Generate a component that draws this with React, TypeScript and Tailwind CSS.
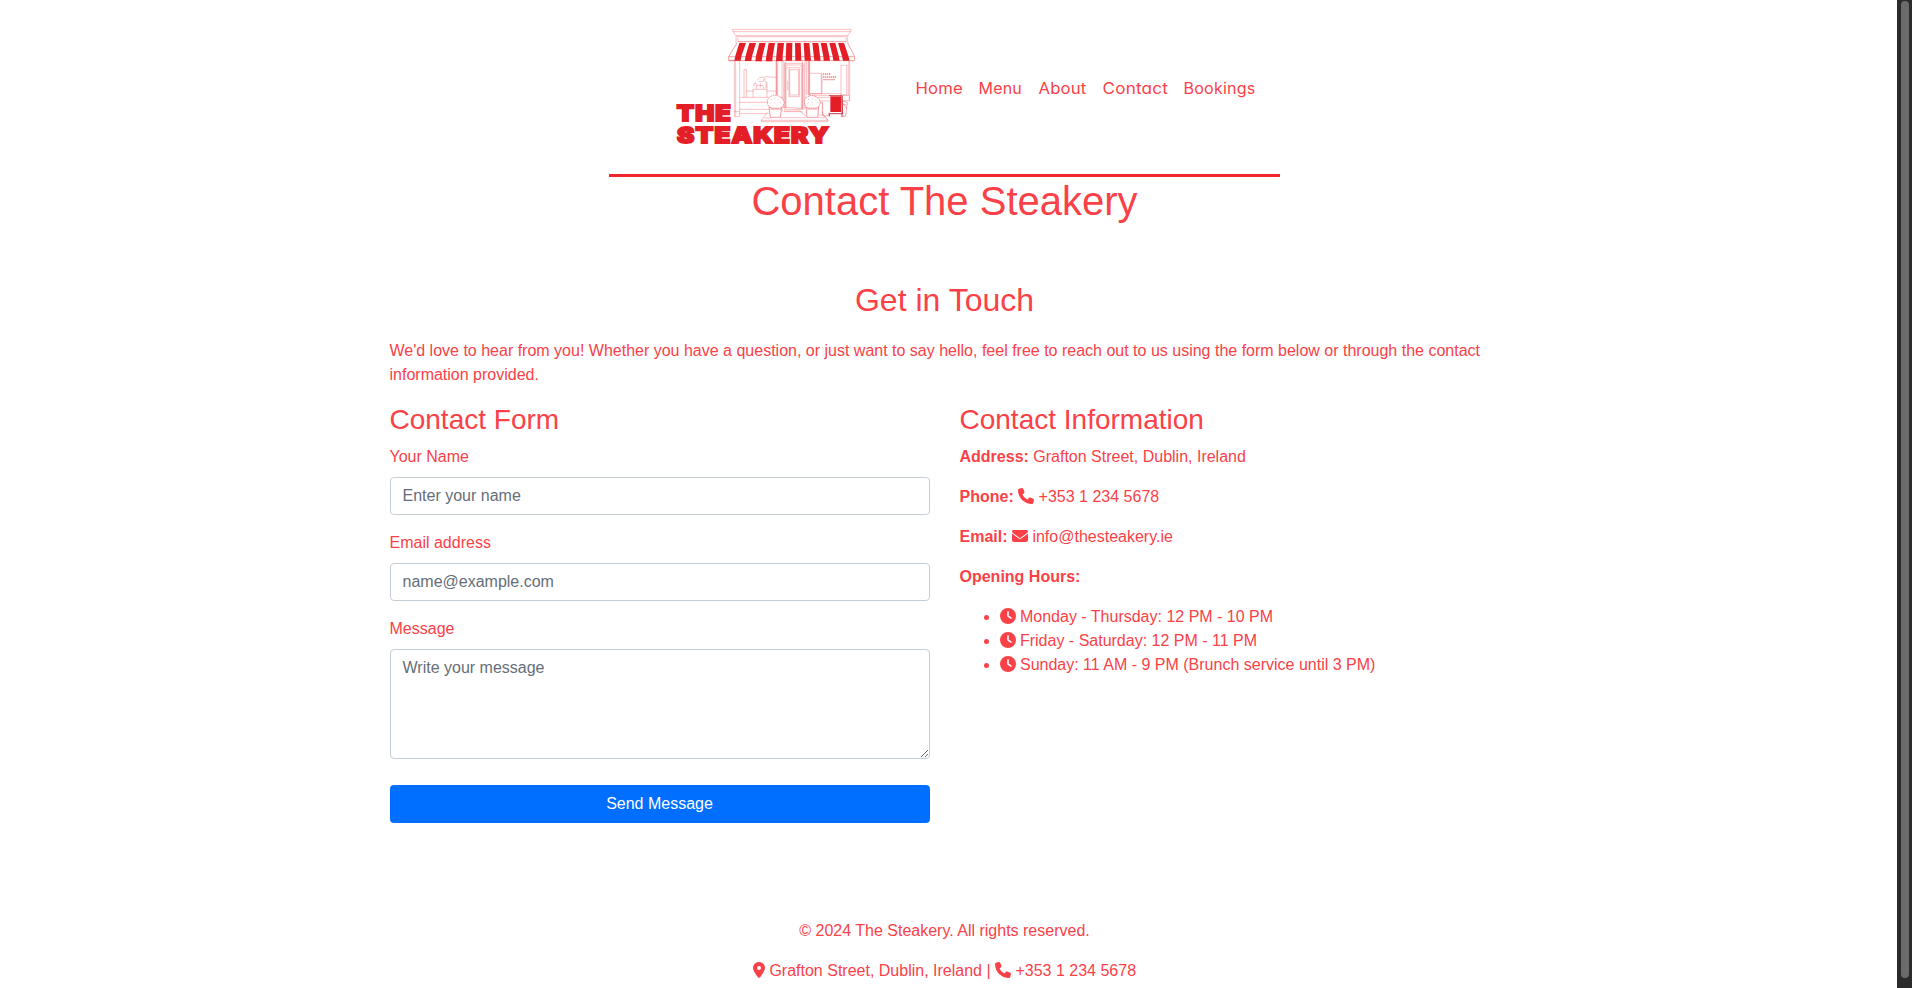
import type { ReactNode } from "react";
import { FaClock, FaEnvelope, FaLocationDot, FaPhone } from "react-icons/fa6";

const NAV = [
  { label: "Home", width: "w-[47px]", length: 47.5 },
  { label: "Menu", width: "w-[44px]", length: 43.5 },
  { label: "About", width: "w-[48px]", length: 48 },
  { label: "Contact", width: "w-[65px]", length: 65.5 },
  { label: "Bookings", width: "w-[72px]", length: 72 },
];

const HOURS = [
  "Monday - Thursday: 12 PM - 10 PM",
  "Friday - Saturday: 12 PM - 11 PM",
  "Sunday: 11 AM - 9 PM (Brunch service until 3 PM)",
];

const STRIPES = [
  "238,84 258,84 244,124 242,137 223,137 226,122",
  "268,84 288,84 276,124 274,138 254,138 257,122",
  "298,84 317,84 307,124 305,139 286,139 288,122",
  "326,84 345,84 338,124 337,139 317,139 319,122",
  "353,84 372,84 368,124 368,138 348,138 349,122",
  "379,84 397,84 396,137 377,137",
  "405,84 422,84 424,137 406,137",
  "431,84 448,84 453,137 434,137",
  "457,84 475,84 482,137 463,137",
  "482,84 500,84 508,122 510,137 491,137 490,124",
  "508,84 526,84 536,122 539,137 520,137 518,124",
  "534,84 552,84 565,122 569,137 549,137 546,124",
];

function Logo() {
  return (
    <svg className="h-[140px] w-[210px] shrink-0" viewBox="0 0 630 420" fill="none">
      <g stroke="#e9505a" strokeOpacity="0.6" strokeWidth="1.8">
        <path d="M217 43H574L572 50H219Z" />
        <path d="M219 50L228 62H563L572 50M228 62V84M231 65H560M563 62V84M234 68V82M558 68V82" />
        <path d="M234 80H558" strokeWidth="3" />
        <path d="M231 84L206 125V137H226M563 84L584 125V137H206M206 125H584" strokeOpacity="0.9" />
        <path d="M223 138V305H239V138M227 140V303M223 290H239" />
        <path d="M565 138V240M569 138V258M543 151H560V240H543Z" />
        <path d="M252 164H259V247M252 164V247M241 247H325M239 262H325M239 283H330M239 296H327M347 247H370" />
        <path d="M260 228H281M279 247V223H321V247M321 228H347M290 222V211H308L312 222M286 214L279 209L286 203L290 211M292 196L300 187L312 186L316 192L309 195L318 201V219M296 200H310M316 185L347 187M301 205V218M321 223V200" />
        <path d="M348 138V240M353 138V240M366 138V290M371 138V280M435 138V280M440 138V240M445 138V240M449 138V245" />
        <path d="M350 138V240M447 138V240" strokeWidth="3" />
        <path d="M374 145H428V283H374ZM378 150H424V280M378 150V280M381 158H418V245H387V160M389 164H416V240H389ZM383 197V226M370 276L428 281M371 290H428M432 145V283" />
        <path d="M376 140V278M427 140V283" strokeWidth="2" />
        <path d="M449 175H484V236H449M486 175V236M452 236H543M449 241H508M453 247H508M546 241H568V257H546M453 258H508" />
        <path d="M321 292L304 316H503L484 290M304 316V320H503V316M313 309H332M362 308H438M474 308H494M371 288H420L438 304" />
        <path d="M475 263H487V300M488 260V303H506M475 300H490L506 317" />
      </g>
      <path
        d="M489 177H511M489 186H528M490 194H524"
        stroke="#e44650"
        strokeWidth="4"
        strokeDasharray="4 2"
        strokeOpacity="0.7"
      />
      <g fill="#fff" stroke="#e9505a" strokeOpacity="0.85" strokeWidth="2">
        <path d="M327 276H365L361 307H331Z" />
        <path d="M438 276H476L473 307H441Z" />
        <path d="M332 279L323 268L322 255L330 245L342 240L356 243L368 251L373 263L368 274L360 280Z" strokeDasharray="5 2" />
        <path d="M443 279L434 269L433 255L440 246L454 241L468 245L478 252L481 264L477 274L469 279Z" strokeDasharray="5 2" />
        <path d="M333 255L336 252M343 248L346 251M354 254L357 251M361 262L363 265M331 265L334 263M342 262L344 265M444 255L447 252M456 248L459 251M466 254L468 257M471 264L473 261M443 265L446 263M455 261L457 264" strokeOpacity=".6" />
        <path d="M331 282H362M441 282H473" />
      </g>
      <path d="M547 258L562 262L557 303L547 307M548 269H558M545 297L552 304M508 292L503 303M544 258L561 282" stroke="#e9505a" strokeOpacity="0.7" strokeWidth="2" />
      <path d="M507 242H546L548 296H508V304M546 242V306" stroke="#c84049" strokeWidth="3" />
      <path d="M511 244H543V291H511Z" fill="#e41e26" />
      <g fill="#e41e26">
        {STRIPES.map((points) => (
          <polygon key={points} points={points} />
        ))}
      </g>
      <g
        fill="#e41e26"
        stroke="#e41e26"
        strokeWidth="5.5"
        className="font-['Inter',sans-serif] text-[64px] font-black tracking-[3px]"
      >
        <text x="50" y="319" textLength="166" lengthAdjust="spacingAndGlyphs">THE</text>
        <text x="51" y="384" textLength="459" lengthAdjust="spacingAndGlyphs">STEAKERY</text>
      </g>
    </svg>
  );
}

function Field({ label, children }: { label: string; children: ReactNode }) {
  return (
    <label className="mb-4 block">
      <span className="mb-2 block">{label}</span>
      {children}
    </label>
  );
}

const CONTROL =
  "block w-full rounded border border-[#c5ced6] bg-white px-3 py-1.5 text-base leading-6 text-[#495057] placeholder:text-[#656e77]";

export default function App() {
  return (
    <div className="flex h-[988px] w-full overflow-hidden bg-white font-['Liberation_Sans',Arial,sans-serif] text-base leading-6 text-[#fa4147]">
      <div className="flex-1 overflow-hidden pr-2">
        <header className="mx-auto flex h-[177px] w-[671px] items-start border-b-[3px] border-[#f0262a]">
          <div className="pt-[15px] pl-[51px]">
            <Logo />
          </div>
          <nav className="mt-[76px] ml-[46px] flex gap-4">
            {NAV.map((item) => (
              <a key={item.label} href="#" className={item.width}>
                <svg className="block h-6 w-full overflow-visible" fill="currentColor">
                  <text
                    x="-0.5"
                    y="18.4"
                    textLength={item.length}
                    lengthAdjust="spacingAndGlyphs"
                    className="font-['Inter',sans-serif] text-[16px] tracking-[0.2px] [font-feature-settings:'cv11']"
                  >
                    {item.label}
                  </text>
                </svg>
              </a>
            ))}
          </nav>
        </header>
        <h1 className="text-center text-[40px] leading-[48px]">Contact The Steakery</h1>

        <main className="mx-auto mt-[55.6px] w-[1110px]">
          <h2 className="mb-5 text-center text-[32px] leading-[38.4px]">Get in Touch</h2>
          <p className="mb-4">
            We'd love to hear from you! Whether you have a question, or just want to say hello, feel free to reach out
            to us using the form below or through the contact information provided.
          </p>
          <div className="grid grid-cols-2 gap-[30px]">
            <form>
              <h3 className="mb-2 text-[28px] leading-[33.6px]">Contact Form</h3>
              <Field label="Your Name">
                <input type="text" placeholder="Enter your name" className={CONTROL} />
              </Field>
              <Field label="Email address">
                <input type="email" placeholder="name@example.com" className={CONTROL} />
              </Field>
              <Field label="Message">
                <textarea rows={4} placeholder="Write your message" className={CONTROL} />
              </Field>
              <button
                type="button"
                className="mt-2.5 h-[38px] w-full rounded bg-[#006fff] text-center leading-6 text-white"
              >
                Send Message
              </button>
            </form>
            <section>
              <h3 className="mb-2 text-[28px] leading-[33.6px]">Contact Information</h3>
              <p className="mb-4">
                <strong>Address:</strong> Grafton Street, Dublin, Ireland
              </p>
              <p className="mb-4">
                <strong>Phone:</strong> <FaPhone className="inline align-[-2px]" /> +353 1 234 5678
              </p>
              <p className="mb-4">
                <strong>Email:</strong> <FaEnvelope className="inline align-[-2px]" /> info@thesteakery.ie
              </p>
              <p className="mb-4">
                <strong>Opening Hours:</strong>
              </p>
              <ul className="list-disc pl-10">
                {HOURS.map((line) => (
                  <li key={line}>
                    <FaClock className="inline align-[-2px]" /> {line}
                  </li>
                ))}
              </ul>
            </section>
          </div>
        </main>

        <footer className="mt-24 text-center">
          <p className="mb-4">© 2024 The Steakery. All rights reserved.</p>
          <p>
            <FaLocationDot className="inline w-3 align-[-2px]" /> Grafton Street, Dublin, Ireland |{" "}
            <FaPhone className="inline align-[-2px]" /> +353 1 234 5678
          </p>
        </footer>
      </div>

      <div className="h-full w-[15px] bg-[#2b2b2b] px-[3.5px] pt-px">
        <div className="h-[977px] w-2 rounded-full bg-[#6b6b6b]" />
      </div>
    </div>
  );
}
